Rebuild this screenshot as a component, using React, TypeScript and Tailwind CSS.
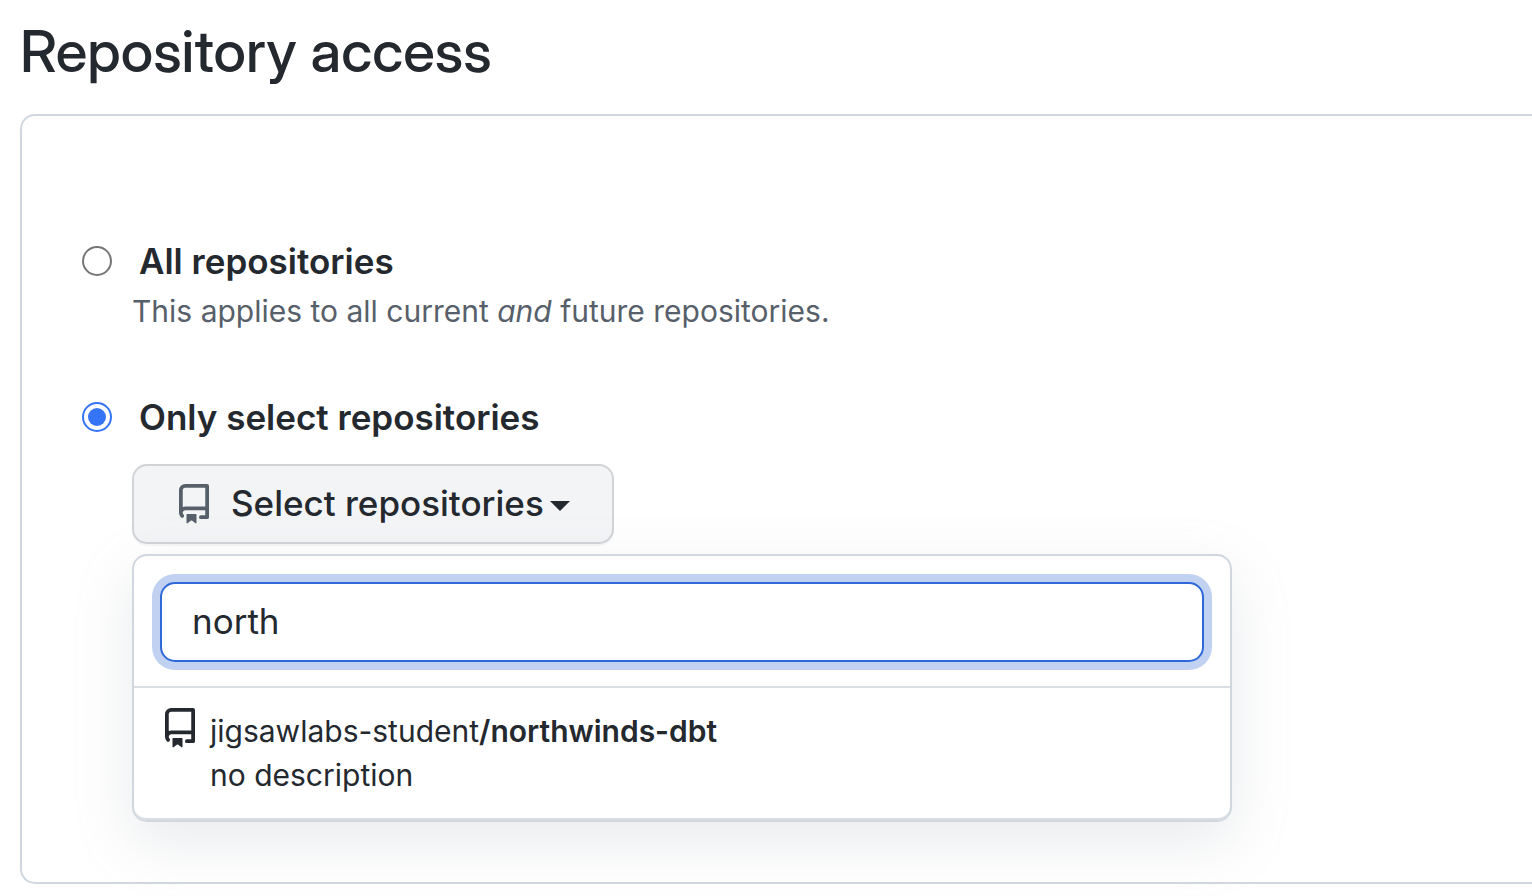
import { useState } from "react";

function RepoIcon({ className }: { className: string }) {
  return (
    <svg viewBox="0 0 16 16" fill="currentColor" aria-hidden="true" className={className}>
      <path d="M2 2.5A2.5 2.5 0 0 1 4.5 0h8.75a.75.75 0 0 1 .75.75v12.5a.75.75 0 0 1-.75.75h-2.5a.75.75 0 0 1 0-1.5h1.75v-2h-8a1 1 0 0 0-.714 1.7.75.75 0 1 1-1.072 1.05A2.495 2.495 0 0 1 2 11.5Zm10.5-1h-8a1 1 0 0 0-1 1v6.708A2.486 2.486 0 0 1 4.5 9h8ZM5 12.25a.25.25 0 0 1 .25-.25h3.5a.25.25 0 0 1 .25.25v3.25a.25.25 0 0 1-.4.2l-1.45-1.087a.249.249 0 0 0-.3 0L5.4 15.7a.25.25 0 0 1-.4-.2Z" />
    </svg>
  );
}

type Mode = "all" | "selected";

interface OptionProps {
  id: Mode;
  label: string;
  mode: Mode;
  onSelect: (mode: Mode) => void;
}

function Option({ id, label, mode, onSelect }: OptionProps) {
  return (
    <div className="flex items-center gap-[27px]">
      <input
        type="radio"
        id={id}
        name="access"
        checked={mode === id}
        onChange={() => onSelect(id)}
        className="size-[30px] shrink-0 appearance-none rounded-full border-2 border-[#767676] bg-white bg-clip-content p-1 checked:border-[#3574f6] checked:bg-[#3574f6]"
      />
      <label htmlFor={id} className="text-[35px] leading-[52px] font-semibold">
        {label}
      </label>
    </div>
  );
}

export default function App() {
  const [mode, setMode] = useState<Mode>("selected");
  const [query, setQuery] = useState("north");

  return (
    <main className="bg-white pt-3 pb-3 pl-5 font-['Inter','Liberation_Sans',sans-serif] text-[#24292f]">
      <h1 className="font-['Inter_Display','Inter','Liberation_Sans',sans-serif] text-[58px] leading-[78px] font-medium">
        Repository access
      </h1>

      <section className="mt-6 rounded-l-[15px] border-2 border-r-0 border-[#d0d7de] pt-[119px] pr-5 pb-[60px] pl-[60px]">
        <Option id="all" label="All repositories" mode={mode} onSelect={setMode} />
        <p className="pl-[50px] text-[30px] leading-[48px] text-[#57606a]">
          This applies to all current <em>and</em> future repositories.
        </p>

        <div className="mt-14">
          <Option id="selected" label="Only select repositories" mode={mode} onSelect={setMode} />
        </div>

        <div className="mt-[21px] ml-[50px] max-w-[1100px]">
          <button
            type="button"
            className="flex h-20 items-center rounded-[15px] border-2 border-[#d1d3d7] bg-[#f3f4f6] pr-[42px] pl-10 shadow-[0_2px_0_rgba(31,35,40,0.04)]"
          >
            <RepoIcon className="size-10 text-[#57606a]" />
            <span className="ml-[17px] pb-[2px] text-[35px] leading-[50px] font-medium">Select repositories</span>
            <svg viewBox="0 0 20 10" fill="currentColor" aria-hidden="true" className="mt-1 ml-[6px] h-[10px] w-5">
              <path d="M0 0h20L10 10Z" />
            </svg>
          </button>

          <div className="relative mt-[10px] rounded-[15px] border-2 border-[#d0d7de] bg-white shadow-[0_20px_60px_rgba(140,149,159,0.2)]">
            <div className="border-b-2 border-[#d8dee4] px-[26px] pt-[26px] pb-6">
              <input
                type="text"
                aria-label="Search for a repository"
                value={query}
                onChange={(event) => setQuery(event.target.value)}
                className="block h-20 w-full rounded-[15px] border-2 border-[#2f69d9] bg-white px-[30px] pb-[2px] text-[35px] shadow-[0_0_0_8px_#c0d1f1] outline-none"
              />
            </div>
            <button
              type="button"
              className="flex w-full items-start gap-[10px] rounded-b-[13px] border-b-2 border-[#d8dee4] px-[26px] pt-5 pb-[21px] text-left text-[30px] leading-[44px]"
            >
              <RepoIcon className="size-10 shrink-0" />
              <span className="pt-px">
                jigsawlabs-student<strong className="font-semibold">/northwinds-dbt</strong>
                <br />
                no description
              </span>
            </button>
          </div>
        </div>
      </section>
    </main>
  );
}
